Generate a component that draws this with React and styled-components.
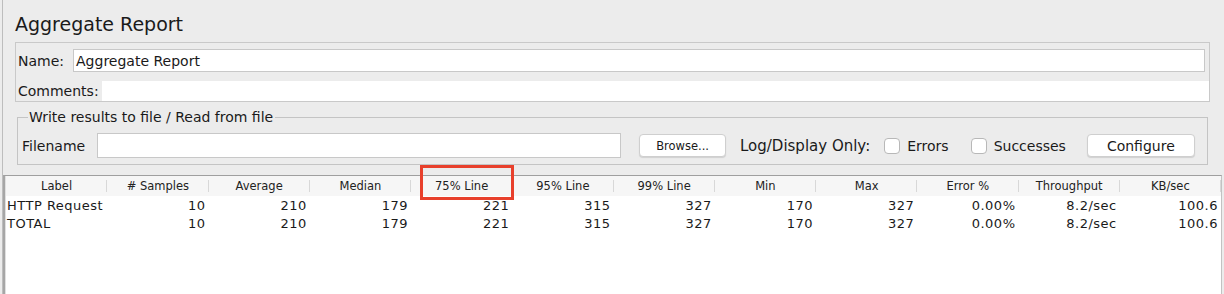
import React from 'react';
import styled, { createGlobalStyle } from 'styled-components';

const GlobalStyle = createGlobalStyle`
  html, body {
    margin: 0;
    padding: 0;
    background: #ececec;
  }
  body {
    font-family: "DejaVu Sans", "Liberation Sans", sans-serif;
    color: #1a1a1a;
  }
`;

const COLUMNS = [
  'Label',
  '# Samples',
  'Average',
  'Median',
  '75% Line',
  '95% Line',
  '99% Line',
  'Min',
  'Max',
  'Error %',
  'Throughput',
  'KB/sec',
];

const ROWS = [
  ['HTTP Request', '10', '210', '179', '221', '315', '327', '170', '327', '0.00%', '8.2/sec', '100.6'],
  ['TOTAL', '10', '210', '179', '221', '315', '327', '170', '327', '0.00%', '8.2/sec', '100.6'],
];

const Page = styled.div`
  width: 1224px;
  height: 294px;
  overflow: hidden;
  padding-left: 2px;
  box-sizing: border-box;
  background: #ececec;
`;

const Frame = styled.div`
  height: 100%;
  border-left: 1px solid #bdbdbd;
  display: flex;
  flex-direction: column;
  position: relative;
`;

const Title = styled.h1`
  margin: 0;
  padding: 13px 0 0 12px;
  font-size: 19px;
  font-weight: normal;
  line-height: 23px;
  height: 27px;
`;

const NamePanel = styled.div`
  margin: 2px 14px 0 12px;
  border: 1px solid #c9c9c9;
  padding: 6px 0 0 2px;
  display: flex;
  flex-direction: column;
  gap: 9px;
`;

const FieldRow = styled.div`
  display: flex;
  align-items: center;
  font-size: 14px;
`;

const FieldLabel = styled.span`
  margin-right: ${props => props.gap || 0}px;
  white-space: nowrap;
`;

const TextBox = styled.div`
  flex: ${props => (props.w ? 'none' : 1)};
  width: ${props => (props.w ? `${props.w}px` : 'auto')};
  height: ${props => props.h}px;
  box-sizing: border-box;
  background: #fff;
  border: ${props => (props.bare ? 'none' : '1px solid #c8c8c8')};
  margin-right: ${props => props.right || 0}px;
  display: flex;
  align-items: center;
  padding-left: 2px;
  font-size: 14px;
`;

const Group = styled.fieldset`
  margin: 7px 16px 0 14px;
  padding: 7px 11px 5px 4px;
  border: 1px solid #c4c4c4;
  min-width: 0;
`;

const Legend = styled.legend`
  padding: 0 2px 0 1px;
  margin-left: 6px;
  font-size: 14px;
  line-height: 16px;
`;

const FileRow = styled.div`
  display: flex;
  align-items: center;
  height: 27px;
  font-size: 14px;
`;

const PushButton = styled.div`
  height: 23px;
  box-sizing: border-box;
  padding: 0 ${props => props.pad}px;
  margin-left: ${props => props.left}px;
  background: #fff;
  border: 1px solid #cfcfcf;
  border-radius: 4px;
  box-shadow: 0 1px 1px rgba(0, 0, 0, 0.12);
  display: flex;
  align-items: center;
  justify-content: center;
  font-size: ${props => props.size}px;
  white-space: nowrap;
`;

const Caption = styled.span`
  margin-left: ${props => props.left}px;
  font-size: ${props => props.size || 14}px;
  white-space: nowrap;
`;

const CheckBox = styled.span`
  width: 16px;
  height: 16px;
  box-sizing: border-box;
  margin-left: ${props => props.left}px;
  border: 1px solid #b8b8b8;
  border-radius: 4px;
  background: #fff;
  flex: none;
`;

const Table = styled.div`
  margin: 10px 2px 0 0;
  flex: 1;
  background: #fff;
  border-top: 1px solid #9f9f9f;
  border-left: 2px solid #a6a6a6;
  border-right: 1px solid #c2c2c2;
  box-shadow: inset 1px 0 0 #e0e0e0;
  padding-left: 1px;
`;

const Grid = styled.div`
  display: grid;
  grid-template-columns: repeat(12, 1fr);
`;

const HeaderCell = styled.div`
  height: 20px;
  background: #f6f6f6;
  font-size: 11.5px;
  line-height: 21px;
  text-align: center;
  color: #222;
  position: relative;
  white-space: nowrap;

  &:not(:last-child)::after {
    content: '';
    position: absolute;
    right: 0;
    top: 4px;
    height: 12px;
    width: 1px;
    background: #d8d8d8;
  }
`;

const Cell = styled.div`
  height: 18px;
  line-height: 19px;
  font-size: 13px;
  letter-spacing: 0.5px;
  text-align: ${props => (props.first ? 'left' : 'right')};
  padding: ${props => (props.first ? '0 0 0 1px' : '0 3px 0 0')};
  white-space: nowrap;
`;

const Highlight = styled.div`
  position: absolute;
  left: 417px;
  top: 165px;
  width: 94px;
  height: 35px;
  box-sizing: border-box;
  border: 3px solid #e8402c;
  pointer-events: none;
`;

export default function App() {
  return (
    <>
      <GlobalStyle />
      <Page>
        <Frame>
          <Title>Aggregate Report</Title>
          <NamePanel>
            <FieldRow>
              <FieldLabel gap={9}>Name:</FieldLabel>
              <TextBox h={23} right={4}>Aggregate Report</TextBox>
            </FieldRow>
            <FieldRow>
              <FieldLabel gap={3}>Comments:</FieldLabel>
              <TextBox h={20} bare />
            </FieldRow>
          </NamePanel>
          <Group>
            <Legend>Write results to file / Read from file</Legend>
            <FileRow>
              <FieldLabel gap={12}>Filename</FieldLabel>
              <TextBox h={25} w={524} />
              <PushButton left={18} pad={16} size={11.5}>Browse...</PushButton>
              <Caption left={14} size={15}>Log/Display Only:</Caption>
              <CheckBox left={14} />
              <Caption left={7}>Errors</Caption>
              <CheckBox left={22} />
              <Caption left={7}>Successes</Caption>
              <PushButton left={21} pad={19} size={14}>Configure</PushButton>
            </FileRow>
          </Group>
          <Table>
            <Grid>
              {COLUMNS.map(col => (
                <HeaderCell key={col}>{col}</HeaderCell>
              ))}
              {ROWS.map((row, r) =>
                row.map((value, i) => (
                  <Cell key={`${r}-${i}`} first={i === 0}>
                    {value}
                  </Cell>
                ))
              )}
            </Grid>
          </Table>
          <Highlight />
        </Frame>
      </Page>
    </>
  );
}
